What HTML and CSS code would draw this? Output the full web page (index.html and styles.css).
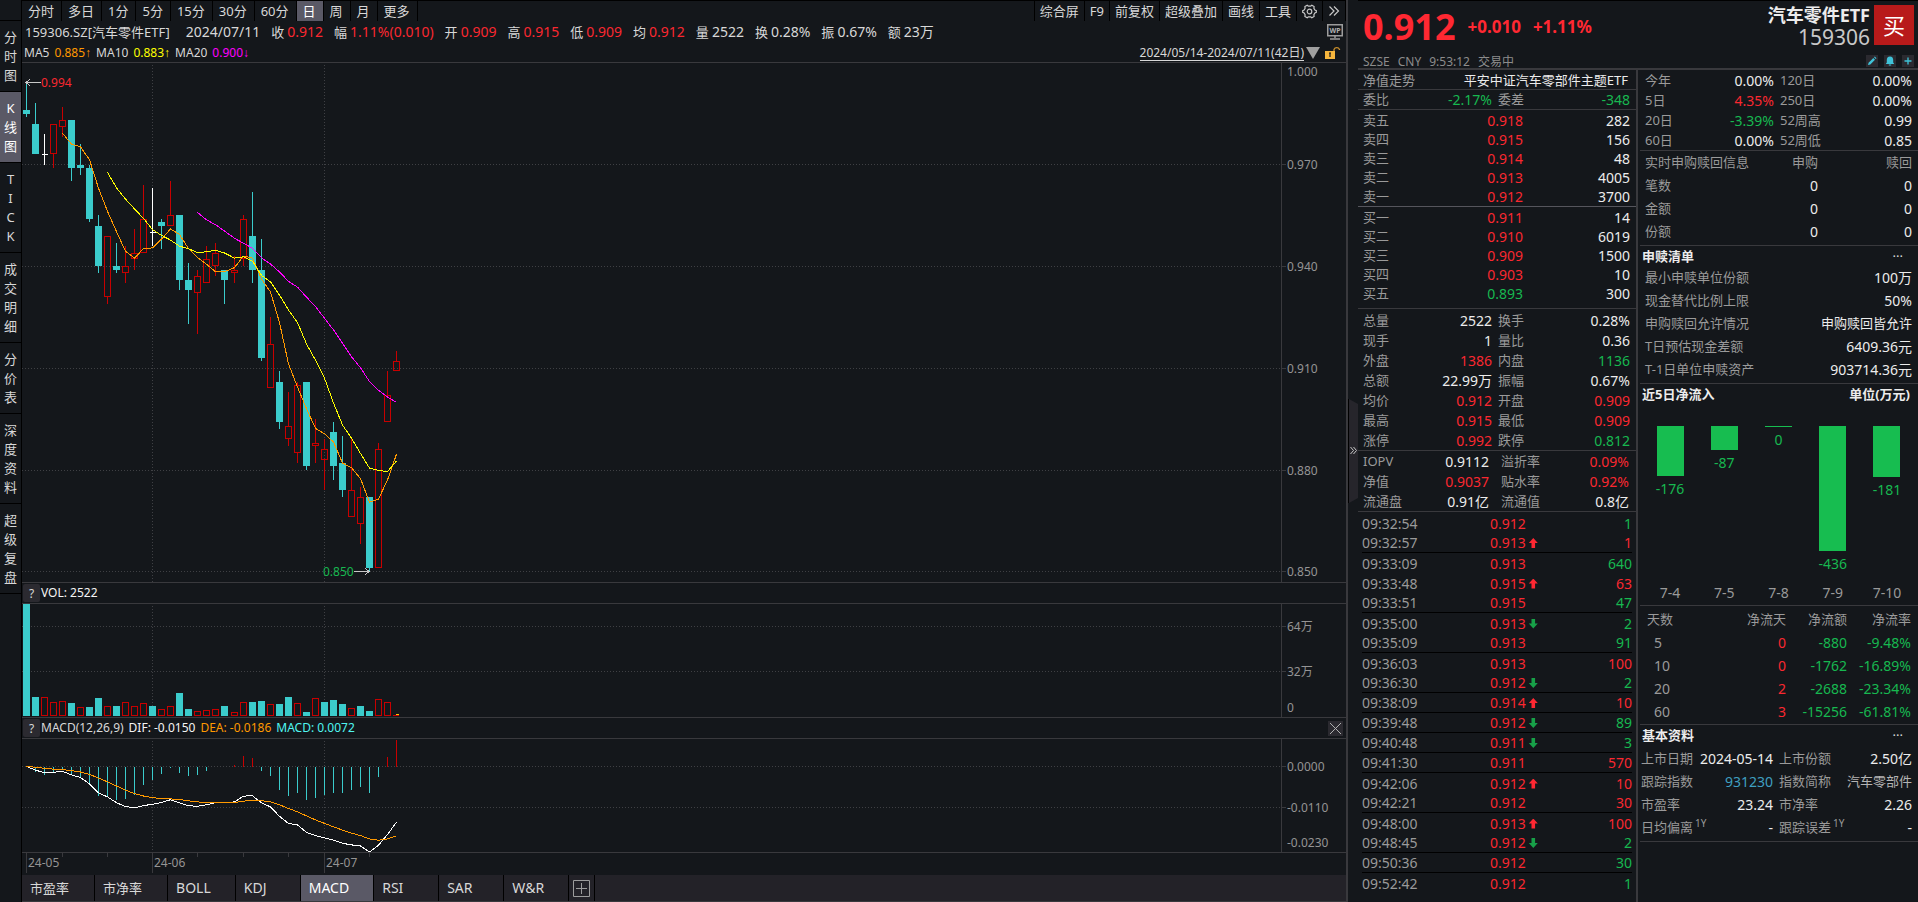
FILE: index.html
```html
<!DOCTYPE html>
<html lang="zh-CN">
<head>
    <meta charset="UTF-8">
    <meta name="viewport" content="width=device-width, initial-scale=1.0">
    <title>159306.SZ 汽车零件ETF</title>
    <link rel="stylesheet" href="styles.css">
</head>
<body>
    <nav class="sidebar">
        <div class="side-top"></div>
        <button class="side-item">分时图</button>
        <button class="side-item active">K线图</button>
        <button class="side-item latin">TICK</button>
        <button class="side-item">成交明细</button>
        <button class="side-item">分价表</button>
        <button class="side-item">深度资料</button>
        <button class="side-item">超级复盘</button>
    </nav>

    <main class="chart-area">
        <div class="toolbar">
            <div class="periods">
                <button>分时</button>
                <button>多日</button>
                <button>1分</button>
                <button>5分</button>
                <button>15分</button>
                <button>30分</button>
                <button>60分</button>
                <button class="active">日</button>
                <button>周</button>
                <button>月</button>
                <button>更多</button>
            </div>
            <div class="tools">
                <button>综合屏</button>
                <button>F9</button>
                <button>前复权</button>
                <button>超级叠加</button>
                <button>画线</button>
                <button>工具</button>
                <button aria-label="设置">
                    <svg width="15" height="15" viewBox="0 0 15 15" fill="none" stroke="#c8c8c8" stroke-width="1.2">
                        <path d="M5.2 1.2 6.4 2.2h2.2l1.2-1 2.3 1.4-.2 1.7 1 1.7 1.4.6v1.8l-1.4.6-1 1.7.2 1.7-2.3 1.4-1.2-1H6.4l-1.2 1-2.3-1.4.2-1.7-1-1.7-1.4-.6V6.6l1.4-.6 1-1.7-.2-1.7z"/>
                        <circle cx="7.5" cy="7.5" r="2.3"/>
                    </svg>
                </button>
                <button aria-label="展开">
                    <svg width="12" height="12" viewBox="0 0 12 12" fill="none" stroke="#c8c8c8" stroke-width="1.2"><path d="M1.5 1.5 6 6l-4.5 4.5M6 1.5 10.5 6 6 10.5"/></svg>
                </button>
            </div>
        </div>

        <div class="quote-line">
            <span class="code">159306.SZ[汽车零件ETF]</span>
            <span class="num date">2024/07/11</span>
            <span class="pair">收<b class="num red">0.912</b></span>
            <span class="pair">幅<b class="num red">1.11%(0.010)</b></span>
            <span class="pair">开<b class="num red">0.909</b></span>
            <span class="pair">高<b class="num red">0.915</b></span>
            <span class="pair">低<b class="num red">0.909</b></span>
            <span class="pair">均<b class="num red">0.912</b></span>
            <span class="pair">量<b class="num">2522</b></span>
            <span class="pair">换<b class="num">0.28%</b></span>
            <span class="pair">振<b class="num">0.67%</b></span>
            <span class="pair">额<b class="num">23万</b></span>
            <svg class="wp" width="16" height="16" viewBox="0 0 16 16">
                <rect x=".75" y=".75" width="14.5" height="11" fill="none" stroke="#9c9c9c" stroke-width="1.5"/>
                <path d="M8 12v2M3 15h10" stroke="#9c9c9c" stroke-width="1.5"/>
                <text x="8" y="9" text-anchor="middle">WP</text>
            </svg>
        </div>

        <div class="ma-line">
            <span>MA5</span><span class="orange">0.885<i class="arrow">↑</i></span>
            <span>MA10</span><span class="yellow">0.883<i class="arrow">↑</i></span>
            <span>MA20</span><span class="magenta">0.900<i class="arrow">↓</i></span>
            <button class="range">2024/05/14-2024/07/11(42日)</button>
            <svg class="caret" width="14" height="12" viewBox="0 0 14 12"><path d="M0 0h14L7 12z" fill="#a0a0a0"/></svg>
            <svg class="lock" width="16" height="14" viewBox="0 0 16 14">
                <rect x="0" y="5" width="10" height="8" fill="#f5b53d"/>
                <path d="M5 7v4M4 7h2" stroke="#14171b" stroke-width="1.2"/>
                <path d="M9 5V3.5a3 3 0 0 1 5.5 0V4" fill="none" stroke="#c98f2b" stroke-width="1.3"/>
            </svg>
        </div>

        <div class="pane">
            <svg class="plot plot-main" id="kline"></svg>
            <svg class="axis plot-main">
                <path d="M0 101.5h4M0 203.5h4M0 305.5h4M0 407.5h4M0 508.5h4"/>
                <text x="5" y="13">1.000</text>
                <text x="5" y="106">0.970</text>
                <text x="5" y="208">0.940</text>
                <text x="5" y="310">0.910</text>
                <text x="5" y="412">0.880</text>
                <text x="5" y="513">0.850</text>
            </svg>
        </div>

        <div class="pane-head">
            <button class="help" aria-label="VOL 说明">?</button>
            <span class="white">VOL: 2522</span>
        </div>
        <div class="pane">
            <svg class="plot plot-sub" id="volume"></svg>
            <svg class="axis plot-sub">
                <path d="M0 22.5h4M0 67.5h4"/>
                <text x="5" y="27">64万</text>
                <text x="5" y="72">32万</text>
                <text x="5" y="108">0</text>
            </svg>
        </div>

        <div class="pane-head">
            <button class="help" aria-label="MACD 说明">?</button>
            <span>MACD(12,26,9)</span>
            <span class="white">DIF: -0.0150</span>
            <span class="orange">DEA: -0.0186</span>
            <span class="cyan">MACD: 0.0072</span>
            <button class="close" aria-label="关闭">
                <svg width="15" height="15" viewBox="0 0 15 15" stroke="#b0b0b0"><path d="M2 2l11 11M13 2L2 13"/></svg>
            </button>
        </div>
        <div class="pane">
            <svg class="plot plot-sub" id="macd"></svg>
            <svg class="axis plot-sub">
                <path d="M0 27.5h4M0 68.5h4"/>
                <text x="5" y="32">0.0000</text>
                <text x="5" y="73">-0.0110</text>
                <text x="5" y="108">-0.0230</text>
            </svg>
        </div>

        <svg class="time-axis" id="timeAxis"></svg>

        <div class="indicators">
            <button>市盈率</button>
            <button>市净率</button>
            <button class="en">BOLL</button>
            <button class="en">KDJ</button>
            <button class="en active">MACD</button>
            <button class="en">RSI</button>
            <button class="en">SAR</button>
            <button class="en">W&amp;R</button>
            <button class="add" aria-label="添加指标">
                <svg width="17" height="17" viewBox="0 0 17 17" fill="none" stroke="#9c9c9c"><path d="M.5.5h16v16H.5zM8.5 3v11M3 8.5h11"/></svg>
            </button>
        </div>
    </main>

    <div class="gutter">
        <button class="collapse" aria-label="收起">
            <svg width="9" height="104" viewBox="0 0 9 104">
                <path d="M0 0 9 5v94l-9 5z" fill="#26252b"/>
                <path d="M1.5 48l3 3.5-3 3.5M4.5 48l3 3.5-3 3.5" fill="none" stroke="#c8c8c8"/>
            </svg>
        </button>
    </div>

    <aside class="panel">
        <header class="head">
            <div class="head-left">
                <div class="price-line">
                    <span class="price">0.912</span>
                    <span class="change">+0.010</span>
                    <span class="change">+1.11%</span>
                </div>
                <div class="market"><span>SZSE</span><span>CNY</span><span>9:53:12</span><span>交易中</span></div>
            </div>
            <div class="head-right">
                <div class="names">
                    <div class="name">汽车零件ETF</div>
                    <div class="symbol">159306</div>
                </div>
                <button class="buy">买</button>
                <div class="actions">
                    <button aria-label="编辑"><svg width="12" height="12" viewBox="0 0 12 12"><path d="M2 10l.6-2.3 4.7-4.7 1.7 1.7-4.7 4.7zM8 2.3l.8-.8 1.7 1.7-.8.8z" fill="#3fc3d8"/></svg></button>
                    <button aria-label="提醒"><svg width="12" height="12" viewBox="0 0 12 12"><path d="M6 1.5c2.3 0 3.2 1.6 3.2 3.5v2.5l1 1.5H1.8l1-1.5V5C2.8 3.1 3.7 1.5 6 1.5zM4.8 9.5h2.4v1H4.8z" fill="#3fc3d8"/></svg></button>
                    <button aria-label="加自选"><svg width="12" height="12" viewBox="0 0 12 12"><path d="M6 2.5v7M2.5 6h7" stroke="#3fc3d8" stroke-width="1.3"/></svg></button>
                </div>
            </div>
        </header>

        <div class="columns">
            <section class="col">
                <div class="fund-row"><span>净值走势</span><span class="fund">平安中证汽车零部件主题ETF</span></div>

                <table class="stats ruled">
                    <tr><th>委比</th><td class="green">-2.17%</td><th>委差</th><td class="green">-348</td></tr>
                </table>

                <table class="book">
                    <tr><th>卖五</th><td class="red">0.918</td><td>282</td></tr>
                    <tr><th>卖四</th><td class="red">0.915</td><td>156</td></tr>
                    <tr><th>卖三</th><td class="red">0.914</td><td>48</td></tr>
                    <tr><th>卖二</th><td class="red">0.913</td><td>4005</td></tr>
                    <tr><th>卖一</th><td class="red">0.912</td><td>3700</td></tr>
                </table>
                <table class="book bids">
                    <tr><th>买一</th><td class="red">0.911</td><td>14</td></tr>
                    <tr><th>买二</th><td class="red">0.910</td><td>6019</td></tr>
                    <tr><th>买三</th><td class="red">0.909</td><td>1500</td></tr>
                    <tr><th>买四</th><td class="red">0.903</td><td>10</td></tr>
                    <tr><th>买五</th><td class="green">0.893</td><td>300</td></tr>
                </table>

                <table class="stats">
                    <tr><th>总量</th><td>2522</td><th>换手</th><td>0.28%</td></tr>
                    <tr><th>现手</th><td>1</td><th>量比</th><td>0.36</td></tr>
                    <tr><th>外盘</th><td class="red">1386</td><th>内盘</th><td class="green">1136</td></tr>
                    <tr><th>总额</th><td>22.99万</td><th>振幅</th><td>0.67%</td></tr>
                    <tr><th>均价</th><td class="red">0.912</td><th>开盘</th><td class="red">0.909</td></tr>
                    <tr><th>最高</th><td class="red">0.915</td><th>最低</th><td class="red">0.909</td></tr>
                    <tr><th>涨停</th><td class="red">0.992</td><th>跌停</th><td class="green">0.812</td></tr>
                </table>

                <table class="stats iopv">
                    <tr><th>IOPV</th><td>0.9112</td><th>溢折率</th><td class="red">0.09%</td></tr>
                    <tr><th>净值</th><td class="red">0.9037</td><th>贴水率</th><td class="red">0.92%</td></tr>
                    <tr><th>流通盘</th><td>0.91亿</td><th>流通值</th><td>0.8亿</td></tr>
                </table>

                <table class="ticks">
                    <tr><th>09:32:54</th><td>0.912</td><td class="green">1</td></tr>
                    <tr class="last"><th>09:32:57</th><td>0.913<i class="up"></i></td><td class="red">1</td></tr>
                    <tr><th>09:33:09</th><td>0.913</td><td class="green">640</td></tr>
                    <tr><th>09:33:48</th><td>0.915<i class="up"></i></td><td class="red">63</td></tr>
                    <tr class="last"><th>09:33:51</th><td>0.915</td><td class="green">47</td></tr>
                    <tr><th>09:35:00</th><td>0.913<i class="down"></i></td><td class="green">2</td></tr>
                    <tr class="last"><th>09:35:09</th><td>0.913</td><td class="green">91</td></tr>
                    <tr><th>09:36:03</th><td>0.913</td><td class="red">100</td></tr>
                    <tr class="last"><th>09:36:30</th><td>0.912<i class="down"></i></td><td class="green">2</td></tr>
                    <tr class="last"><th>09:38:09</th><td>0.914<i class="up"></i></td><td class="red">10</td></tr>
                    <tr class="last"><th>09:39:48</th><td>0.912<i class="down"></i></td><td class="green">89</td></tr>
                    <tr class="last"><th>09:40:48</th><td>0.911<i class="down"></i></td><td class="green">3</td></tr>
                    <tr class="last"><th>09:41:30</th><td>0.911</td><td class="red">570</td></tr>
                    <tr><th>09:42:06</th><td>0.912<i class="up"></i></td><td class="red">10</td></tr>
                    <tr class="last"><th>09:42:21</th><td>0.912</td><td class="red">30</td></tr>
                    <tr><th>09:48:00</th><td>0.913<i class="up"></i></td><td class="red">100</td></tr>
                    <tr class="last"><th>09:48:45</th><td>0.912<i class="down"></i></td><td class="green">2</td></tr>
                    <tr class="last"><th>09:50:36</th><td>0.912</td><td class="green">30</td></tr>
                    <tr><th>09:52:42</th><td>0.912</td><td class="green">1</td></tr>
                </table>
            </section>

            <section class="col info">
                <table class="stats returns">
                    <tr><th>今年</th><td>0.00%</td><th>120日</th><td>0.00%</td></tr>
                    <tr><th>5日</th><td class="red">4.35%</td><th>250日</th><td>0.00%</td></tr>
                    <tr><th>20日</th><td class="green">-3.39%</td><th>52周高</th><td>0.99</td></tr>
                    <tr><th>60日</th><td>0.00%</td><th>52周低</th><td>0.85</td></tr>
                </table>

                <table class="wide creation">
                    <tr><th>实时申购赎回信息</th><th>申购</th><th>赎回</th></tr>
                    <tr><th>笔数</th><td>0</td><td>0</td></tr>
                    <tr><th>金额</th><td>0</td><td>0</td></tr>
                    <tr><th>份额</th><td>0</td><td>0</td></tr>
                </table>

                <div class="title"><h2>申赎清单</h2><button class="more" aria-label="更多">···</button></div>
                <table class="wide pcf">
                    <tr><th>最小申赎单位份额</th><td>100万</td></tr>
                    <tr><th>现金替代比例上限</th><td>50%</td></tr>
                    <tr><th>申购赎回允许情况</th><td class="cn">申购赎回皆允许</td></tr>
                    <tr><th>T日预估现金差额</th><td>6409.36元</td></tr>
                    <tr><th>T-1日单位申赎资产</th><td>903714.36元</td></tr>
                </table>

                <div class="title"><h2>近5日净流入</h2><h2>单位(万元)</h2></div>
                <div class="flow">
                    <div class="flow-col"><div class="bar" style="height: 50px"></div><span>-176</span><em>7-4</em></div>
                    <div class="flow-col"><div class="bar" style="height: 24px"></div><span>-87</span><em>7-5</em></div>
                    <div class="flow-col"><div class="bar" style="height: 1px"></div><span>0</span><em>7-8</em></div>
                    <div class="flow-col"><div class="bar" style="height: 125px"></div><span>-436</span><em>7-9</em></div>
                    <div class="flow-col"><div class="bar" style="height: 51px"></div><span>-181</span><em>7-10</em></div>
                </div>

                <table class="wide days">
                    <tr><th>天数</th><th>净流天</th><th>净流额</th><th>净流率</th></tr>
                    <tr><td>5</td><td class="red">0</td><td class="green">-880</td><td class="green">-9.48%</td></tr>
                    <tr><td>10</td><td class="red">0</td><td class="green">-1762</td><td class="green">-16.89%</td></tr>
                    <tr><td>20</td><td class="red">2</td><td class="green">-2688</td><td class="green">-23.34%</td></tr>
                    <tr><td>60</td><td class="red">3</td><td class="green">-15256</td><td class="green">-61.81%</td></tr>
                </table>

                <div class="title"><h2>基本资料</h2><button class="more" aria-label="更多">···</button></div>
                <table class="stats basics">
                    <tr><th>上市日期</th><td>2024-05-14</td><th>上市份额</th><td>2.50亿</td></tr>
                    <tr><th>跟踪指数</th><td><a href="#">931230</a></td><th>指数简称</th><td class="cn dim">汽车零部件</td></tr>
                    <tr><th>市盈率</th><td>23.24</td><th>市净率</th><td>2.26</td></tr>
                    <tr><th>日均偏离<sup>1Y</sup></th><td>-</td><th>跟踪误差<sup>1Y</sup></th><td>-</td></tr>
                </table>
            </section>
        </div>
    </aside>

    <script src="chart.js"></script>
</body>
</html>
```
FILE: styles.css
```css
* {
    box-sizing: border-box;
}

body {
    margin: 0;
    min-height: 100vh;
    display: flex;
    background-color: #14171b;
    color: #d8d8d8;
    font-family: "Noto Sans", "Noto Sans CJK SC", sans-serif;
    font-size: 13px;
    line-height: 20px;
}

button {
    margin: 0;
    padding: 0;
    border: none;
    background: none;
    color: inherit;
    font: inherit;
    cursor: pointer;
    white-space: nowrap;
}

svg {
    display: block;
}

.num {
    font-size: 14px;
    font-weight: normal;
}

.red { color: #fa2830; }
.green { color: #17b850; }
.orange { color: #ff9900; }
.yellow { color: #ffff00; }
.magenta { color: #ff00ff; }
.cyan { color: #50f5f0; }
.white { color: #f4f4f4; }

/* left navigation */
.sidebar {
    width: 22px;
    flex: none;
    display: flex;
    flex-direction: column;
    border-right: 1px solid #000;
}

.side-top {
    height: 21px;
    border-bottom: 1px solid #000;
}

.side-item {
    padding: 7px 4px 6px;
    border-bottom: 1px solid #000;
    line-height: 19px;
    white-space: normal;
    word-break: break-all;
    width: 21px;
    text-align: center;
}

.side-item.latin {
    padding: 7px 6px 6px;
}

.side-item.active {
    background-color: #5a5966;
    color: #fff;
}

/* chart area */
.chart-area {
    flex: 1;
    min-width: 0;
}

.toolbar {
    display: flex;
    justify-content: space-between;
    height: 21px;
    border-top: 1px solid #000;
}

.periods,
.tools {
    display: flex;
}

.toolbar button {
    height: 20px;
    border-right: 1px solid #000;
}

.periods button {
    padding: 0 7px 0 6px;
}

.periods .active {
    background-color: #5a5966;
    color: #fff;
}

.tools button {
    padding: 0 5px;
}

.tools {
    border-left: 1px solid #000;
}

.quote-line,
.ma-line {
    display: flex;
    align-items: center;
    white-space: nowrap;
}

.quote-line {
    height: 21px;
    gap: 11px;
    padding: 0 3px;
}

.date {
    margin-left: 5px;
}

.pair {
    display: flex;
    gap: 3px;
}

.wp {
    margin-left: auto;
}

.wp text {
    fill: #b0b0b0;
    font-size: 7px;
    font-weight: bold;
}

.ma-line {
    height: 20px;
    gap: 5px;
    padding: 2px 5px 0 2px;
    font-size: 12px;
}

.arrow {
    font-family: "Liberation Sans", sans-serif;
    font-style: normal;
}

.range {
    margin-left: auto;
    height: 16px;
    border-bottom: 1px solid #d8d8d8;
    line-height: 15px;
}

.caret {
    margin-left: -3px;
}

.pane {
    display: flex;
    border-top: 1px solid #39393d;
    border-bottom: 1px solid #39393d;
}

.plot {
    flex: 1;
    min-width: 0;
    shape-rendering: crispEdges;
}

.plot text {
    font-size: 12px;
}

.plot-main {
    height: 519px;
}

.plot-sub {
    height: 113px;
}

.axis {
    flex: none;
    width: 65px;
    border-left: 1px solid #39393d;
}

.axis text,
.time-axis text {
    fill: #949494;
    font-size: 12px;
}

.axis path,
.time-axis path {
    stroke: #39393d;
}

.pane-head {
    display: flex;
    align-items: center;
    gap: 5px;
    height: 20px;
    padding: 0 3px 0 1px;
    font-size: 12px;
}

.help {
    width: 17px;
    height: 18px;
    margin-right: -4px;
    border-radius: 2px;
    background-color: #2b2a30;
}

.close {
    margin-left: auto;
    background-color: #2b2a30;
}

.time-axis {
    width: 100%;
    height: 22px;
    shape-rendering: crispEdges;
}

.indicators {
    display: flex;
    background-color: #232228;
    height: 27px;
    border-bottom: 1px solid #39393d;
}

.indicators button {
    min-width: 65px;
    padding: 0 25px 0 8px;
    border-right: 1px solid #000;
    text-align: left;
}

.indicators .en {
    padding-right: 24px;
    font-size: 14px;
}

.indicators .active {
    background-color: #5a5966;
    color: #fff;
}

.indicators .add {
    min-width: 26px;
    padding: 0 4px;
}

/* handle between chart and panel */
.gutter {
    flex: none;
    width: 12px;
    display: flex;
    align-items: center;
    border-left: 2px solid #39393d;
}

.collapse {
    border-left: 1px solid #000;
}

/* quote panel */
.panel {
    flex: none;
    width: 560px;
    display: flex;
    flex-direction: column;
}

.head {
    display: flex;
    justify-content: space-between;
    height: 70px;
    border-top: 1px solid #000;
    border-bottom: 2px solid #39393d;
}

.price-line {
    display: flex;
    align-items: center;
    gap: 12px;
    padding-left: 5px;
    height: 51px;
    line-height: 57px;
    color: #ff2832;
    font-weight: bold;
}

.price {
    font-size: 36px;
}

.change {
    font-size: 17px;
}

.market {
    display: flex;
    gap: 8px;
    padding-left: 5px;
    font-size: 12px;
    color: #8c8c8c;
}

.head-right {
    display: grid;
    grid-template-columns: auto 40px;
    column-gap: 4px;
    align-content: start;
    padding: 4px 4px 0 0;
}

.names {
    text-align: right;
}

.name {
    font-size: 18px;
    font-weight: bold;
    color: #ececec;
}

.symbol {
    font-size: 21px;
    line-height: 24px;
    color: #c8c8c8;
}

.buy {
    width: 40px;
    height: 40px;
    background-color: #b81a1a;
    color: #fff;
    font-size: 22px;
}

.actions {
    grid-column: 1 / -1;
    display: flex;
    justify-content: flex-end;
    gap: 6px;
    margin-top: 6px;
}

.actions button {
    background-color: #2b2a30;
}

.columns {
    flex: 1;
    display: grid;
    grid-template-columns: 1fr 1fr;
}

.col {
    border-right: 2px solid #39393d;
}

.info {
    border-right: none;
    padding-left: 2px;
}

table {
    width: 100%;
    border-collapse: separate;
    border-spacing: 0;
    table-layout: fixed;
    border-bottom: 1px solid #39393d;
}

th {
    padding: 0;
    font-weight: normal;
    text-align: left;
    color: #9a9a9a;
    white-space: nowrap;
    line-height: 19px;
}

td {
    padding: 0;
    font-size: 14px;
    text-align: right;
    color: #ececec;
    white-space: nowrap;
    line-height: 19px;
}

td.red { color: #fa2830; }
td.green { color: #17b850; }

td.cn {
    font-size: 13px;
}

td.dim {
    color: #b4b4b4;
}

.fund-row {
    display: flex;
    justify-content: space-between;
    height: 20px;
    padding: 0 8px 0 5px;
    border-bottom: 1px solid #39393d;
    color: #9a9a9a;
}

.fund {
    color: #ececec;
}

.stats {
    padding: 1px 6px 0 5px;
}

.stats tr {
    height: 20px;
}

.stats th:nth-child(1) { width: 36px; }
.stats th:nth-child(3) { width: 52px; padding-left: 6px; }
.stats td:nth-child(2) { width: 93px; }

.ruled {
    padding-top: 0;
}

.ruled tr {
    height: 19px;
}

.book {
    padding: 1px 6px 0 5px;
}

.book tr {
    height: 19px;
}

.book th {
    width: 120px;
}

.book td:nth-child(2) {
    width: 40px;
}

.bids {
    padding: 1px 6px 5px 5px;
    border-top: 1px solid #55555c;
}

.book:not(.bids) {
    border-bottom: none;
}

.iopv {
    padding: 0 7px 0 5px;
}

.iopv td:nth-child(2) { width: 90px; }
.iopv th:nth-child(3) { padding-left: 12px; }

.ticks {
    padding: 1px 4px 0;
    border-bottom: none;
}

.ticks tr {
    height: 20px;
}

.ticks th {
    width: 128px;
    font-size: 14px;
}

.ticks td:nth-child(2) {
    text-align: left;
    color: #fa2830;
}

.ticks .last th,
.ticks .last td {
    border-bottom: 1px solid #000;
}

.up,
.down {
    display: inline-block;
    width: 9px;
    height: 10px;
    margin-left: 3px;
}

.up {
    background-color: #ff2832;
    clip-path: polygon(50% 0, 100% 50%, 70% 50%, 70% 100%, 30% 100%, 30% 50%, 0 50%);
}

.down {
    background-color: #17a048;
    clip-path: polygon(50% 100%, 100% 50%, 70% 50%, 70% 0, 30% 0, 30% 50%, 0 50%);
}

/* right column */
.returns {
    padding: 0 6px 0 5px;
}

.wide {
    padding: 0 6px 0 5px;
}

.wide tr {
    height: 23px;
}

.creation {
    padding: 0 6px 2px 5px;
}

.creation th:nth-child(n+2),
.days th:nth-child(n+2) {
    text-align: right;
}

.creation td:nth-child(2),
.creation th:nth-child(2) {
    width: 60px;
}

.creation td:nth-child(3),
.creation th:nth-child(3) {
    width: 94px;
}

.title {
    display: flex;
    justify-content: space-between;
    align-items: center;
    height: 20px;
    padding: 0 8px 0 2px;
}

.title h2 {
    margin: 0;
    font-size: 13px;
    color: #ececec;
}

.more {
    margin-right: 7px;
}

.pcf {
    padding-bottom: 2px;
}

.pcf td {
    width: 92px;
}

.flow {
    display: grid;
    grid-template-columns: repeat(5, 1fr);
    height: 202px;
    padding: 22px 4px 0 3px;
    border-bottom: 1px solid #39393d;
    font-size: 14px;
}

.flow-col {
    display: flex;
    flex-direction: column;
    align-items: center;
    color: #17b850;
}

.flow-col span {
    margin-top: 3px;
}

.flow-col em {
    margin-top: auto;
    padding-bottom: 2px;
    font-style: normal;
    color: #9a9a9a;
}

.bar {
    width: 27px;
    flex: none;
    background-color: #17bd50;
}

.days {
    padding: 2px 7px 1px;
}

.days td:first-child {
    padding-left: 7px;
    text-align: left;
    color: #9a9a9a;
}

.days th:nth-child(3) { width: 61px; }
.days th:nth-child(4) { width: 64px; }

.basics {
    padding: 2px 6px 2px 1px;
}

.basics tr {
    height: 23px;
}

.basics th:nth-child(1) { width: 54px; }
.basics td:nth-child(2) { width: 78px; }
.basics th:nth-child(3) { width: 72px; }

.basics a {
    color: #3f9fc0;
    text-decoration: none;
}

sup {
    font-size: 10px;
    line-height: 0;
    margin-left: 2px;
}
```
FILE: chart.js
```javascript
// open, high, low, close in thousandths, then volume (万) and volume colour
const days = [
    [986, 994, 984, 985, 80, 'd'], [982, 988, 973, 973, 13.5, 'd'], [973, 979, 970, 973, 13.3, 'u'],
    [973, 982, 969, 982, 9.7, 'u'], [981, 987, 978, 983, 10.5, 'u'], [983, 983, 965, 969, 9.2, 'd'],
    [970, 976, 967, 969, 6.2, 'u'], [969, 970, 953, 954, 6.4, 'd'], [952, 955, 938, 940, 12.8, 'd'],
    [931, 949, 929, 949, 6.9, 'u'], [940, 947, 938, 939, 7.1, 'd'], [938, 946, 935, 940, 9.7, 'u'],
    [942, 951, 939, 944, 6.9, 'u'], [944, 964, 944, 954, 9, 'u'], [950, 963, 946, 950, 7.1, 'd'],
    [953, 954, 945, 952, 4.8, 'u'], [952, 965, 952, 955, 6.9, 'u'], [955, 955, 933, 936, 16.4, 'd'],
    [936, 941, 923, 933, 5, 'd'], [932, 939, 920, 937, 3.3, 'u'], [935, 946, 935, 942, 4, 'u'],
    [940, 947, 937, 944, 4.8, 'u'], [939, 939, 929, 936, 7.1, 'd'], [938, 943, 935, 939, 2.6, 'u'],
    [942, 955, 940, 954, 9.7, 'u'], [949, 962, 935, 939, 10, 'd'], [939, 948, 912, 913, 10.7, 'd'],
    [904, 925, 904, 917, 8.3, 'u'], [906, 909, 892, 894, 8.5, 'd'], [889, 903, 887, 893, 13.5, 'd'],
    [885, 906, 882, 905, 9, 'u'], [906, 906, 880, 881, 2.8, 'd'], [887, 895, 882, 888, 12.6, 'u'],
    [883, 889, 874, 886, 10, 'd'], [891, 894, 877, 881, 11.4, 'd'], [882, 890, 872, 874, 8.5, 'd'],
    [866, 889, 866, 874, 5.5, 'u'], [864, 875, 858, 872, 7.1, 'd'], [872, 872, 850, 851, 3.6, 'd'],
    [851, 888, 851, 886, 11.9, 'u'], [894, 909, 894, 902, 9.7, 'u'], [909, 915, 909, 912, 0.3, 'u']
];

const TEAL = '#3bcccc';
const RED = '#c80000';
const GRID = '#3f4044';

const closes = days.map(d => d[3]);
const xOf = i => Math.round(3.82 + i * 9.03);

function line(x1, y1, x2, y2, color, extra = '') {
    return `<line x1="${x1}" y1="${y1}" x2="${x2}" y2="${y2}" stroke="${color}" ${extra}/>`;
}

function box(i, top, height, filled) {
    const x = xOf(i);
    return filled
        ? `<rect x="${x - 3}" y="${top}" width="7" height="${height}" fill="${TEAL}"/>`
        : `<rect x="${x - 2.5}" y="${top + 0.5}" width="6" height="${Math.max(height - 1, 1)}" fill="none" stroke="${RED}"/>`;
}

function curve(values, yOf, color) {
    const points = values
        .map((v, i) => v === null ? null : `${xOf(i) + 0.5},${yOf(v).toFixed(1)}`)
        .filter(p => p !== null);
    return `<polyline points="${points.join(' ')}" fill="none" stroke="${color}"/>`;
}

function grid(rows) {
    const dots = 'stroke-dasharray="1 2"';
    return rows.map(y => line(0, y, '100%', y, GRID, dots)).join('')
        + [14, 33].map(i => line(xOf(i) + 0.5, 2, xOf(i) + 0.5, '100%', GRID, dots)).join('');
}

function average(n) {
    return closes.map((c, i) => i < n - 1 ? null : closes.slice(i - n + 1, i + 1).reduce((a, b) => a + b) / n);
}

function ema(values, n) {
    let last = values[0];
    return values.map(v => last = (v * 2 + last * (n - 1)) / (n + 1));
}

function drawKline() {
    const yOf = p => 101.5 + (970 - p) * 3.392;
    let out = grid([101.5, 203.5, 305.5, 407.5, 508.5]);
    days.forEach(([open, high, low, close], i) => {
        const x = xOf(i) + 0.5;
        const top = Math.round(yOf(Math.max(open, close)));
        const bottom = Math.round(yOf(Math.min(open, close)));
        const color = close > open ? RED : close < open ? TEAL : '#ffffff';
        out += line(x, Math.round(yOf(high)), x, top, color);
        out += line(x, bottom, x, Math.round(yOf(low)), color);
        if (close === open) {
            out += line(x - 3, top + 0.5, x + 3, top + 0.5, color);
        } else {
            out += box(i, top, bottom - top, close < open);
        }
    });
    out += curve(average(5), yOf, '#ff9900');
    out += curve(average(10), yOf, '#ffff00');
    out += curve(average(20), yOf, '#ff00ff');
    // highest and lowest price marks
    out += '<path d="M4 19.5h15M8 16l-4 3.5 4 3.5" fill="none" stroke="#c8c8c8"/>';
    out += '<text x="19" y="24" fill="#fa2830">0.994</text>';
    out += '<text x="301" y="513" fill="#17b850">0.850</text>';
    out += '<path d="M332 508.5h15M343 505l4 3.5-4 3.5" fill="none" stroke="#c8c8c8"/>';
    document.getElementById('kline').innerHTML = out;
}

function drawVolume() {
    let out = grid([22.5, 67.5]);
    days.forEach((d, i) => {
        const height = Math.max(Math.round(d[4] * 45 / 32), 1);
        if (i === days.length - 1) {
            out += line(xOf(i) - 3, 111.5, xOf(i) + 3, 111.5, RED);
            out += line(xOf(i), 110.5, xOf(i) + 3, 110.5, '#ffcc00');
        } else {
            out += box(i, 112 - height, height, d[5] === 'd');
        }
    });
    document.getElementById('volume').innerHTML = out;
}

function drawMacd() {
    const yOf = v => 27.5 - v * 3.727;
    const slow = ema(closes, 26);
    const dif = ema(closes, 12).map((v, i) => v - slow[i]);
    const dea = ema(dif, 9);
    let out = grid([27.5, 68.5]);
    dif.forEach((v, i) => {
        const bar = 2 * (v - dea[i]);
        out += line(xOf(i) + 0.5, 27.5, xOf(i) + 0.5, yOf(bar), bar > 0 ? RED : TEAL);
    });
    out += curve(dif, yOf, '#ffffff');
    out += curve(dea, yOf, '#ff9900');
    document.getElementById('macd').innerHTML = out;
}

function drawTimeAxis() {
    const months = [[0, '24-05'], [14, '24-06'], [33, '24-07']];
    let out = [4, 9, 19, 24, 29, 38].map(i => `<path d="M${xOf(i) + 0.5} 0v4"/>`).join('');
    months.forEach(([i, name]) => {
        out += `<path d="M${xOf(i) + 0.5} 0v20"/><text x="${xOf(i) + 2}" y="14">${name}</text>`;
    });
    document.getElementById('timeAxis').innerHTML = out;
}

drawKline();
drawVolume();
drawMacd();
drawTimeAxis();
```
